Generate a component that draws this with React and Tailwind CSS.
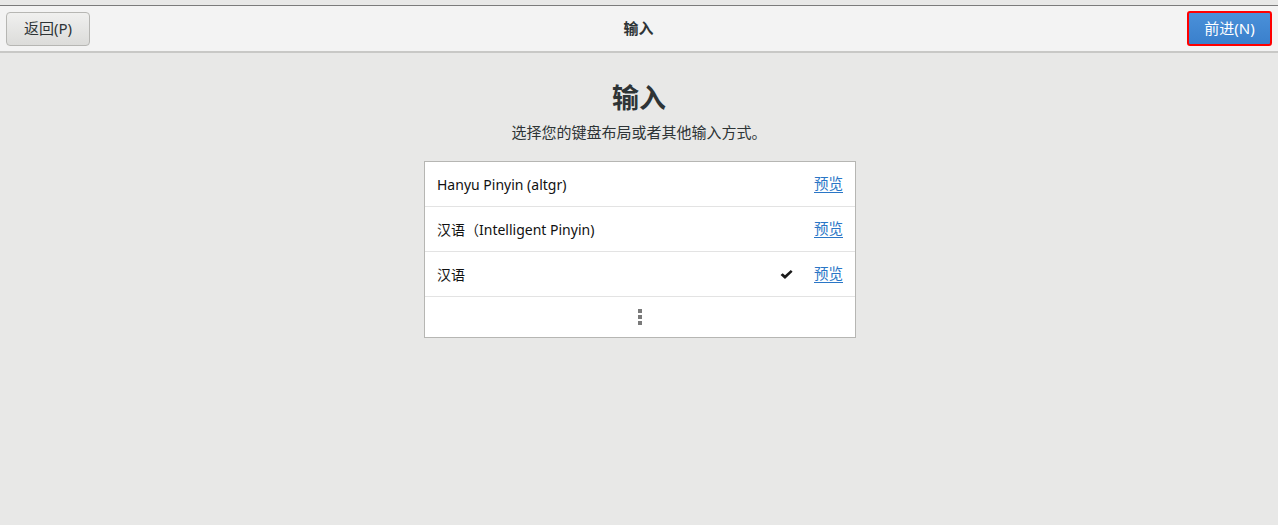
import React from "react";

const rows = [
  { name: "Hanyu Pinyin (altgr)", checked: false },
  { name: "汉语（Intelligent Pinyin)", checked: false },
  { name: "汉语", checked: true },
];

function App() {
  return (
    <div
      className="w-[1278px] h-[525px] bg-[#e8e8e7] text-[#2e3436] overflow-hidden"
      style={{ fontFamily: '"Noto Sans", "Noto Sans CJK SC", sans-serif' }}
    >
      {/* Header bar */}
      <div className="h-[5px] bg-[#e8e8e7]" />
      <div className="h-[48px] bg-[#f3f3f3] border-t border-[#7b7b7b] border-b-2 border-b-[#c8c8c6] flex items-center justify-between px-[6px]">
        <button className="w-[84px] h-[34px] rounded-[4px] border border-[#b6b6b3] bg-gradient-to-b from-[#f0f0ef] to-[#dcdcda] text-[15px] text-[#2e3436] flex items-center justify-center">
          返回(P)
        </button>
        <div className="text-[15px] font-bold text-[#2e3436]">输入</div>
        <button className="w-[85px] h-[35px] rounded-[3px] border-2 border-[#ff0000] bg-gradient-to-b from-[#4a90d9] to-[#3a80cc] text-[15px] text-white flex items-center justify-center">
          前进(N)
        </button>
      </div>

      {/* Content */}
      <div className="flex flex-col items-center">
        <h1 className="mt-[28px] text-[27px] leading-[34px] font-bold text-[#2e3436]">输入</h1>
        <p className="mt-[7px] text-[15px] leading-[20px] text-[#2e3436]">选择您的键盘布局或者其他输入方式。</p>

        <div className="mt-[19px] ml-[2px] w-[432px] bg-white border border-[#b6b6b3]">
          {rows.map((r) => (
            <div
              key={r.name}
              className="h-[45px] border-b border-[#e3e3e3] flex items-center pl-[12px] pr-[12px]"
            >
              <span className="flex-1 text-[14px] text-[#111111]">{r.name}</span>
              {r.checked && (
                <svg width="13" height="11" viewBox="0 0 12 10" className="mr-[21px]">
                  <path d="M0.5 5.5 L2.5 3.8 L4.6 5.8 L10 0.8 L11.6 2.4 L4.6 9.2 Z" fill="#1a1a1a" />
                </svg>
              )}
              <a className="text-[14.5px] text-[#2a76c6] underline underline-offset-[3px] cursor-pointer">预览</a>
            </div>
          ))}
          <div className="h-[40px] flex flex-col items-center justify-center gap-[2px]">
            <span className="block w-[4px] h-[4px] bg-[#7a7a7a]" />
            <span className="block w-[4px] h-[4px] bg-[#7a7a7a]" />
            <span className="block w-[4px] h-[4px] bg-[#7a7a7a]" />
          </div>
        </div>
      </div>
    </div>
  );
}

export default App;
